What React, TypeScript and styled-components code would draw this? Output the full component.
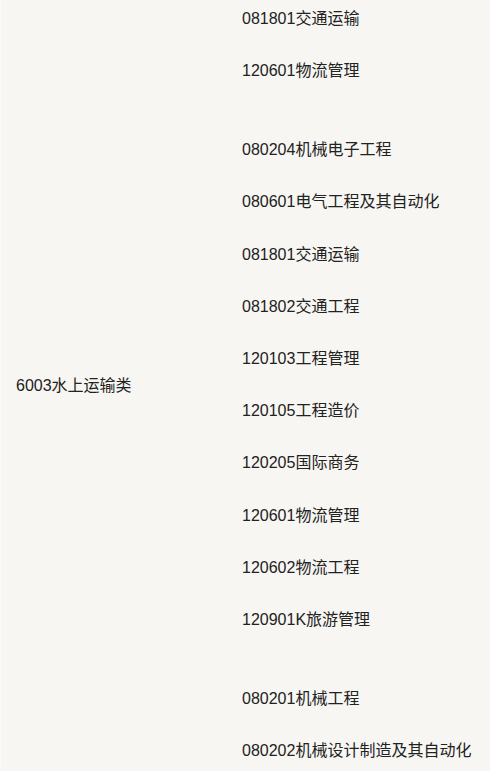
import React from 'react';
import styled, { createGlobalStyle } from 'styled-components';

const GlobalStyle = createGlobalStyle`
  html, body {
    margin: 0;
    padding: 0;
    background: #f7f6f2;
  }
  body {
    font-family: "Liberation Sans", Arial, "Noto Sans CJK SC", sans-serif;
    color: #222;
  }
`;

const Table = styled.div`
  display: grid;
  grid-template-columns: 226px 1fr;
  min-height: 771px;
  border-left: 1px solid #fbfaf8;
  box-sizing: border-box;
`;

const LabelCell = styled.div`
  display: flex;
  align-items: center;
  padding-left: 15px;
  font-size: 16px;
  line-height: 26px;
`;

const ItemsCell = styled.div<{ $top: number; $bottom: number }>`
  display: flex;
  flex-direction: column;
  gap: 26.2px;
  padding: ${(p) => p.$top}px 15px ${(p) => p.$bottom}px;
`;

const Item = styled.div`
  font-size: 16px;
  line-height: 26px;
  white-space: nowrap;
`;

type Row = { label: string; items: string[]; top: number; bottom: number };

const rows: Row[] = [
  { label: '', items: ['081801交通运输', '120601物流管理'], top: 6, bottom: 27 },
  {
    label: '6003水上运输类',
    items: [
      '080204机械电子工程',
      '080601电气工程及其自动化',
      '081801交通运输',
      '081802交通工程',
      '120103工程管理',
      '120105工程造价',
      '120205国际商务',
      '120601物流管理',
      '120602物流工程',
      '120901K旅游管理',
    ],
    top: 26,
    bottom: 27,
  },
  { label: '', items: ['080201机械工程', '080202机械设计制造及其自动化'], top: 26, bottom: 20 },
];

export default function App() {
  return (
    <>
      <GlobalStyle />
      <Table>
        {rows.map((row, i) => (
          <React.Fragment key={i}>
            <LabelCell>{row.label}</LabelCell>
            <ItemsCell $top={row.top} $bottom={row.bottom}>
              {row.items.map((it) => (
                <Item key={it}>{it}</Item>
              ))}
            </ItemsCell>
          </React.Fragment>
        ))}
      </Table>
    </>
  );
}
